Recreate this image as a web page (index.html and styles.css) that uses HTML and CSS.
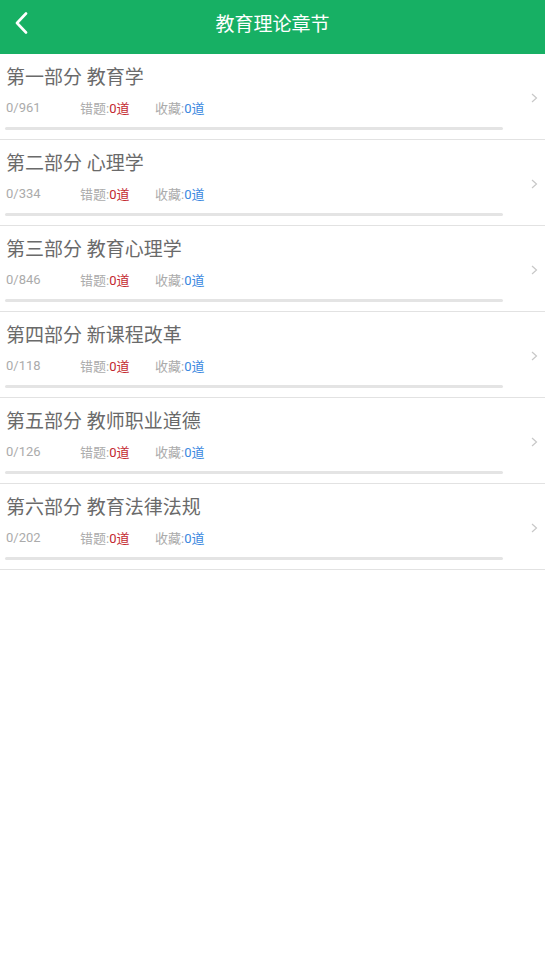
FILE: index.html
```html
<!DOCTYPE html>
<html lang="zh">
<head>
<meta charset="utf-8">
<title>教育理论章节</title>
<link rel="stylesheet" href="styles.css">
</head>
<body>
<header class="topbar">
  <span class="back">
    <svg width="14" height="22" viewBox="0 0 14 22"><path d="M12 1.5 L3 11 L12 20.5" fill="none" stroke="#fff" stroke-width="2.6" stroke-linecap="round" stroke-linejoin="round"/></svg>
  </span>
  <h1 class="title">教育理论章节</h1>
</header>
<ul class="list">
  <li class="item">
    <div class="body">
      <div class="name">第一部分 教育学</div>
      <div class="stats"><span class="count">0/961</span><span class="lbl">错题:<b class="red">0道</b></span><span class="lbl">收藏:<b class="blue">0道</b></span></div>
      <div class="bar"></div>
    </div>
    <span class="arrow"><svg width="7" height="10" viewBox="0 0 7 10"><path d="M1 1 L5.5 5 L1 9" fill="none" stroke="#c8c8c8" stroke-width="1.2"/></svg></span>
  </li>
  <li class="item">
    <div class="body">
      <div class="name">第二部分 心理学</div>
      <div class="stats"><span class="count">0/334</span><span class="lbl">错题:<b class="red">0道</b></span><span class="lbl">收藏:<b class="blue">0道</b></span></div>
      <div class="bar"></div>
    </div>
    <span class="arrow"><svg width="7" height="10" viewBox="0 0 7 10"><path d="M1 1 L5.5 5 L1 9" fill="none" stroke="#c8c8c8" stroke-width="1.2"/></svg></span>
  </li>
  <li class="item">
    <div class="body">
      <div class="name">第三部分 教育心理学</div>
      <div class="stats"><span class="count">0/846</span><span class="lbl">错题:<b class="red">0道</b></span><span class="lbl">收藏:<b class="blue">0道</b></span></div>
      <div class="bar"></div>
    </div>
    <span class="arrow"><svg width="7" height="10" viewBox="0 0 7 10"><path d="M1 1 L5.5 5 L1 9" fill="none" stroke="#c8c8c8" stroke-width="1.2"/></svg></span>
  </li>
  <li class="item">
    <div class="body">
      <div class="name">第四部分 新课程改革</div>
      <div class="stats"><span class="count">0/118</span><span class="lbl">错题:<b class="red">0道</b></span><span class="lbl">收藏:<b class="blue">0道</b></span></div>
      <div class="bar"></div>
    </div>
    <span class="arrow"><svg width="7" height="10" viewBox="0 0 7 10"><path d="M1 1 L5.5 5 L1 9" fill="none" stroke="#c8c8c8" stroke-width="1.2"/></svg></span>
  </li>
  <li class="item">
    <div class="body">
      <div class="name">第五部分 教师职业道德</div>
      <div class="stats"><span class="count">0/126</span><span class="lbl">错题:<b class="red">0道</b></span><span class="lbl">收藏:<b class="blue">0道</b></span></div>
      <div class="bar"></div>
    </div>
    <span class="arrow"><svg width="7" height="10" viewBox="0 0 7 10"><path d="M1 1 L5.5 5 L1 9" fill="none" stroke="#c8c8c8" stroke-width="1.2"/></svg></span>
  </li>
  <li class="item">
    <div class="body">
      <div class="name">第六部分 教育法律法规</div>
      <div class="stats"><span class="count">0/202</span><span class="lbl">错题:<b class="red">0道</b></span><span class="lbl">收藏:<b class="blue">0道</b></span></div>
      <div class="bar"></div>
    </div>
    <span class="arrow"><svg width="7" height="10" viewBox="0 0 7 10"><path d="M1 1 L5.5 5 L1 9" fill="none" stroke="#c8c8c8" stroke-width="1.2"/></svg></span>
  </li>
</ul>
</body>
</html>
```
FILE: styles.css
```css
html, body {
  margin: 0;
  padding: 0;
  background: #fff;
  font-family: Roboto, "Noto Sans CJK SC", sans-serif;
}
.topbar {
  height: 54px;
  background: #17b064;
  display: flex;
  align-items: center;
  justify-content: center;
  position: relative;
}
.back {
  position: absolute;
  left: 14px;
  top: 12px;
  display: flex;
}
.title {
  margin: 0;
  color: #fff;
  font-size: 19px;
  font-weight: normal;
  line-height: 24px;
  margin-top: -5px;
}
.list {
  list-style: none;
  margin: 0;
  padding: 0;
}
.item {
  height: 85px;
  border-bottom: 1px solid #e2e2e2;
  display: flex;
  align-items: center;
}
.body {
  flex: none;
  width: 498px;
  padding-left: 5px;
  align-self: flex-start;
}
.name {
  margin-top: 12px;
  font-size: 19px;
  line-height: 24px;
  color: #6a6a6a;
  padding-left: 1px;
}
.stats {
  margin-top: 8px;
  height: 18px;
  display: flex;
  align-items: center;
  font-size: 13px;
  color: #ababab;
  padding-left: 1px;
}
.count {
  width: 74px;
  font-size: 13px;
}
.lbl {
  width: 75px;
}
.lbl b {
  font-weight: normal;
}
.red { color: #c3282e; }
.blue { color: #3a88e0; }
.bar {
  margin-top: 11px;
  height: 3px;
  background: #e4e4e4;
  border-radius: 2px;
}
.arrow {
  margin-left: 28px;
  display: flex;
  margin-top: 2px;
}
```
